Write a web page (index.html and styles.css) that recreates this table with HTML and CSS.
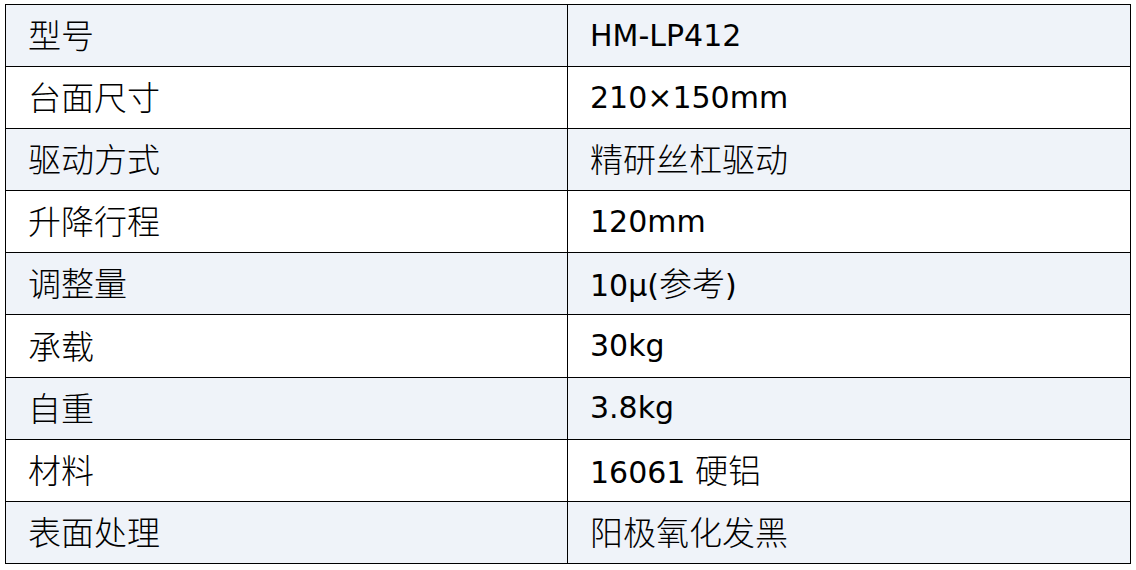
FILE: index.html
```html
<!DOCTYPE html>
<html lang="zh">
<head>
<meta charset="utf-8">
<link rel="stylesheet" href="styles.css">
</head>
<body>
<table class="spec">
  <tr class="odd"><td><span class="cj">型号</span></td><td>HM-LP412</td></tr>
  <tr><td><span class="cj">台面尺寸</span></td><td>210×150mm</td></tr>
  <tr class="odd"><td><span class="cj">驱动方式</span></td><td><span class="cj">精研丝杠驱动</span></td></tr>
  <tr><td><span class="cj">升降行程</span></td><td>120mm</td></tr>
  <tr class="odd"><td><span class="cj">调整量</span></td><td>10μ(<span class="cj">参考</span>)</td></tr>
  <tr><td><span class="cj">承载</span></td><td>30kg</td></tr>
  <tr class="odd"><td><span class="cj">自重</span></td><td>3.8kg</td></tr>
  <tr><td><span class="cj">材料</span></td><td>16061 <span class="cj">硬铝</span></td></tr>
  <tr class="odd"><td><span class="cj">表面处理</span></td><td><span class="cj">阳极氧化发黑</span></td></tr>
</table>
</body>
</html>
```
FILE: styles.css
```css
html, body {
  margin: 0;
  padding: 0;
  background: #ffffff;
}
body {
  padding: 4px 0 0 5px;
}
.spec {
  border-collapse: collapse;
  width: 1126px;
  table-layout: fixed;
  font-family: "DejaVu Sans", "Noto Sans CJK SC", sans-serif;
  font-size: 30px;
  color: #000;
}
.spec td {
  border: 1px solid #000;
  height: 61.1px;
  padding: 0 0 0 22px;
  vertical-align: middle;
  white-space: nowrap;
  line-height: 1;
}
.spec td:first-child {
  width: 539px;
}
.spec tr.odd td {
  background: #eff3f9;
}
.cj {
  font-family: "Noto Sans CJK SC", sans-serif;
  font-size: 33px;
  font-weight: 300;
}
```
